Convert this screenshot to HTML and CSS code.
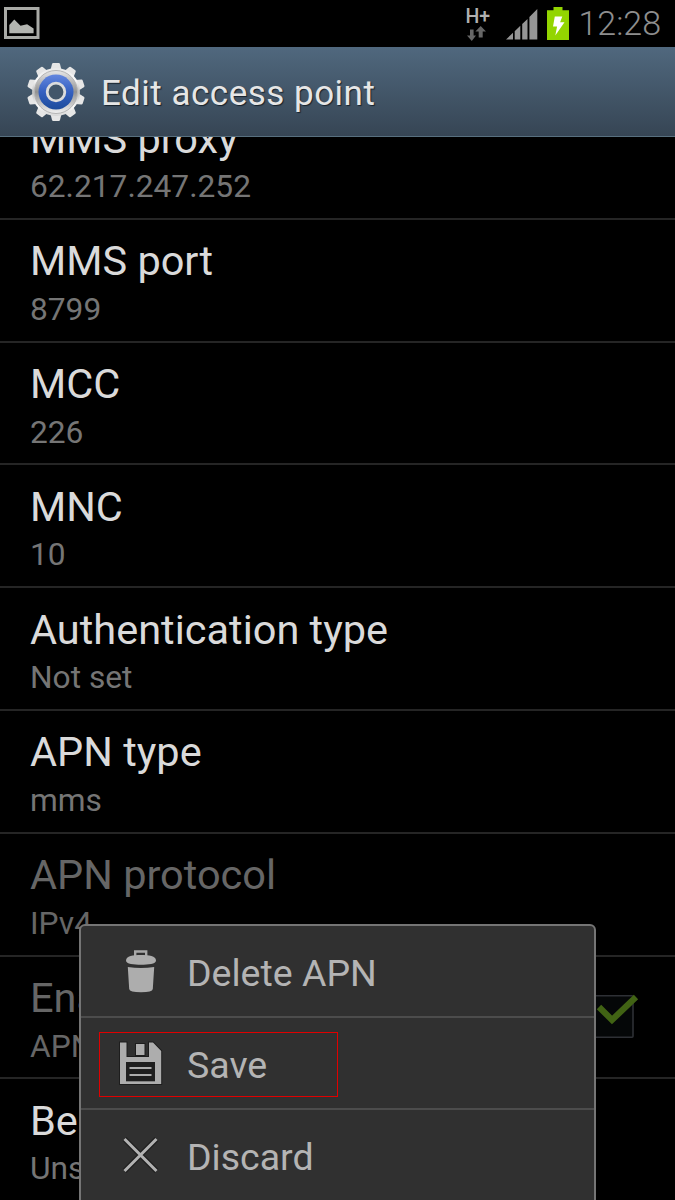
FILE: index.html
```html
<!DOCTYPE html>
<html lang="en">
<head>
<meta charset="utf-8">
<title>Edit access point</title>
<link rel="stylesheet" href="styles.css">
</head>
<body>
<div class="screen">
  <div class="status">
    <svg class="status-picture" width="36" height="33" viewBox="0 0 36 33">
      <rect x="1.5" y="1.5" width="32.5" height="29" fill="none" stroke="#a9aaa6" stroke-width="3"/>
      <path d="M5.3 26.3V18l5-5.500 6.200 6.300 6.600-1.600 6.500 4.200v4.900z" fill="#b3b5b0"/>
    </svg>
    <div class="network">
      <span class="network-type">H+</span>
      <svg class="network-arrows" width="20" height="15" viewBox="0 0 20 15">
        <path d="M3 3.500h3.600V9.500H9L4.800 15 0 9.500h3zM11.700 11.500h4V5.500h3.300L13.700 0 8.400 5.500h3.300z" fill="#666"/>
      </svg>
    </div>
    <svg class="signal" width="32" height="31" viewBox="0 0 32 31">
      <path d="M0 30.5l7-6.7v6.7zM8.7 30.500V22.200l5.600-5.400v13.700zM16.200 30.500V15l5.300-5.100v20.600zM23.400 30.500V8L31.300 0v30.500z" fill="#969696"/>
    </svg>
    <svg class="battery" width="23" height="33" viewBox="0 0 23 33">
      <path d="M6.500 0h9v3.300H22V33H0V3.300h6.500z" fill="#93d500"/>
      <path d="M7.800 9.500h7.500l-2.200 5.800h4.400L8.300 28.500l1.800-9H6z" fill="#fff"/>
    </svg>
    <span class="clock">12:28</span>
  </div>

  <div class="header">
    <svg class="gear" width="58" height="60" viewBox="-29 -30 58 60">
      <defs>
        <linearGradient id="metal" x1="0" y1="0" x2="0" y2="1">
          <stop offset="0" stop-color="#e9e9e9"/><stop offset=".25" stop-color="#fafafa"/>
          <stop offset=".5" stop-color="#bdbdbd"/><stop offset=".8" stop-color="#fafafa"/>
          <stop offset="1" stop-color="#d6d6d6"/>
        </linearGradient>
        <linearGradient id="ring" x1="0" y1="0" x2="0" y2="1">
          <stop offset="0" stop-color="#e8e8e8"/><stop offset=".5" stop-color="#929292"/><stop offset="1" stop-color="#f2f2f2"/>
        </linearGradient>
        <linearGradient id="blue" x1="0" y1="0" x2="0" y2="1">
          <stop offset="0" stop-color="#6487df"/><stop offset=".5" stop-color="#3560c0"/><stop offset="1" stop-color="#1d4c9c"/>
        </linearGradient>
        <path id="tooth" d="M-5.500 -22L-4 -28Q-3.700 -29 -2.800 -29H2.800Q3.700 -29 4 -28L5.500 -22z"/>
      </defs>
      <g fill="#e6e6e6">
        <use href="#tooth"/><use href="#tooth" transform="rotate(36)"/><use href="#tooth" transform="rotate(72)"/>
        <use href="#tooth" transform="rotate(108)"/><use href="#tooth" transform="rotate(144)"/><use href="#tooth" transform="rotate(180)"/>
        <use href="#tooth" transform="rotate(216)"/><use href="#tooth" transform="rotate(252)"/><use href="#tooth" transform="rotate(288)"/>
        <use href="#tooth" transform="rotate(324)"/>
      </g>
      <circle r="24" fill="url(#metal)"/>
      <circle r="21.500" fill="url(#ring)" stroke="#b5b5b5" stroke-width="1"/>
      <circle r="17.500" fill="url(#blue)"/>
      <circle r="8.800" fill="#42566a" stroke="#dcdcdc" stroke-width="2.800"/>
    </svg>
    <h1 class="header-title">Edit access point</h1>
  </div>

  <div class="content">
    <div class="list">
      <div class="row"><div class="name">MMS proxy</div><div class="value">62.217.247.252</div></div>
      <div class="row"><div class="name">MMS port</div><div class="value">8799</div></div>
      <div class="row"><div class="name">MCC</div><div class="value">226</div></div>
      <div class="row"><div class="name">MNC</div><div class="value">10</div></div>
      <div class="row"><div class="name">Authentication type</div><div class="value">Not set</div></div>
      <div class="row"><div class="name">APN type</div><div class="value">mms</div></div>
      <div class="row disabled"><div class="name">APN protocol</div><div class="value">IPv4</div></div>
      <div class="row disabled with-check">
        <div><div class="name">Ena</div><div class="value">APN</div></div>
        <svg class="check" width="50" height="46" viewBox="0 0 50 46">
          <rect x="1" y="2.700" width="42" height="41.500" rx="1" fill="#050708" stroke="#2e3035" stroke-width="1.600"/>
          <path d="M9 14L22 27L46 4" fill="none" stroke="#416314" stroke-width="6.200"/>
        </svg>
      </div>
      <div class="row"><div class="name">Be</div><div class="value">Uns</div></div>
    </div>
  </div>

  <div class="menu">
    <div class="item">
      <svg class="item-icon" width="44" height="44" viewBox="0 0 44 44">
        <path d="M16.200 7V2.500h11V7" fill="none" stroke="#a8a8a8" stroke-width="2.400"/>
        <path d="M7 11.500C7 7 14 6 22 6s15 1 15 5.500C37 15 29 15.800 22 15.800S7 15 7 11.500z" fill="#adadad"/>
        <path d="M8.800 18q13.200 2 26.400 0L33.800 40q-.3 3.300-11.800 3.300T10.200 40z" fill="#adadad"/>
      </svg>
      <span>Delete APN</span>
    </div>
    <div class="item">
      <svg class="item-icon" width="44" height="44" viewBox="0 0 44 44">
        <path d="M1 1.500H7.500V16H30V1.500H34L42.200 10V43H1z" fill="#adadad" stroke="#1d1d1d" stroke-width="2" paint-order="stroke"/>
        <rect x="17" y="3" width="8.500" height="11" fill="#adadad" stroke="#1d1d1d" stroke-width="2" paint-order="stroke"/>
        <rect x="7" y="21" width="29" height="19.300" fill="#1f1f1f"/>
        <path d="M10.500 27H32.500M10.500 34H32.500" stroke="#adadad" stroke-width="2.200"/>
      </svg>
      <span>Save</span>
      <div class="highlight"></div>
    </div>
    <div class="item">
      <svg class="item-icon" width="44" height="44" viewBox="0 0 44 44">
        <path d="M5.500 6L37.500 38M37.500 6L5.500 38" stroke="#202020" stroke-width="5.500"/>
        <path d="M5.500 6L37.500 38M37.500 6L5.500 38" stroke="#b2b2b2" stroke-width="3"/>
      </svg>
      <span>Discard</span>
    </div>
  </div>
</div>
</body>
</html>
```
FILE: styles.css
```css
body {
  margin: 0;
  background: #000;
  font-family: Roboto, sans-serif;
}

.screen {
  position: relative;
  display: flex;
  flex-direction: column;
  width: 675px;
  height: 1200px;
  overflow: hidden;
  background: #000;
}

.status {
  display: flex;
  align-items: flex-start;
  box-sizing: border-box;
  height: 47px;
  padding: 7px 14px 0 4px;
}

.status-picture {
  flex: none;
}

.network {
  display: flex;
  flex-direction: column;
  width: 28px;
  margin-left: 425.500px;
}

.network-type {
  color: #b0b0b0;
  font-size: 19.500px;
  font-weight: 500;
  line-height: 19px;
}

.network-arrows {
  margin-left: 1px;
}

.signal {
  margin: 2px 0 0 12.500px;
}

.battery {
  margin-left: 9px;
}

.clock {
  flex: 1;
  color: #8e8e8e;
  font-size: 34px;
  font-weight: 300;
  line-height: 32px;
  text-align: right;
  white-space: nowrap;
}

.header {
  display: flex;
  align-items: center;
  box-sizing: border-box;
  height: 90px;
  padding-left: 27px;
  gap: 16px;
  border-bottom: 1px solid #58707f;
  background: linear-gradient(#50687e, #364554);
}

.header-title {
  margin: 3px 0 0;
  color: #e6e6e6;
  font-size: 35px;
  font-weight: 400;
  letter-spacing: 0.500px;
  text-shadow: 1px 1px 1px #18222c;
}

.content {
  flex: 1;
  min-height: 0;
  overflow: hidden;
}

.list {
  margin-top: -40px;
}

.row {
  box-sizing: border-box;
  height: 122.800px;
  padding: 17.500px 0 0 30px;
  border-bottom: 2px solid #252525;
}

.name {
  color: #dadada;
  font-size: 41.500px;
  line-height: 48px;
  white-space: nowrap;
}

.value {
  margin-top: 5.500px;
  color: #757575;
  font-size: 31.700px;
  line-height: 37px;
}

.disabled .name,
.disabled .value {
  color: #666;
}

.with-check {
  display: flex;
  justify-content: space-between;
  padding-right: 35px;
}

.check {
  margin-top: 19px;
}

.menu {
  position: absolute;
  left: 79px;
  top: 924px;
  box-sizing: border-box;
  width: 517px;
  height: 290px;
  border: 2px solid #757575;
  border-radius: 6px;
  background: #303030;
}

.item {
  position: relative;
  display: flex;
  align-items: center;
  box-sizing: border-box;
  height: 92px;
  padding-left: 38px;
  gap: 24px;
  border-bottom: 2px solid #4c4c4c;
  color: #b4b4b4;
  font-size: 37.500px;
}

.item span {
  margin-top: 3px;
}

.highlight {
  position: absolute;
  left: 18px;
  top: 14px;
  box-sizing: border-box;
  width: 239px;
  height: 65px;
  border: 1px solid #e00000;
}
```
